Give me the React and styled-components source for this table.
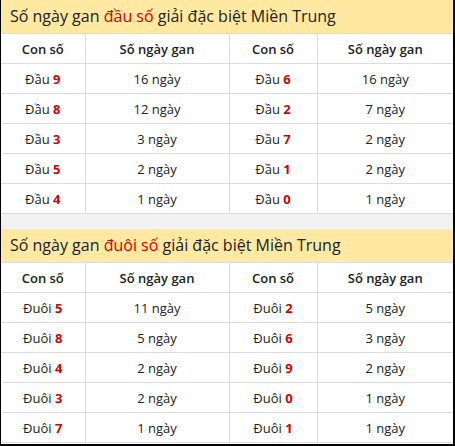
import React from "react";
import styled, { createGlobalStyle } from "styled-components";

const GlobalStyle = createGlobalStyle`
  body {
    margin: 0;
    background: #fff;
    font-family: "Open Sans", "Noto Sans", Arial, sans-serif;
  }
`;

const dauRows = [
  ["9", "16", "6", "16"],
  ["8", "12", "2", "7"],
  ["3", "3", "7", "2"],
  ["5", "2", "1", "2"],
  ["4", "1", "0", "1"],
];

const duoiRows = [
  ["5", "11", "2", "5"],
  ["8", "5", "6", "3"],
  ["4", "2", "9", "2"],
  ["3", "2", "0", "1"],
  ["7", "1", "1", "1"],
];

const Frame = styled.div`
  width: 452px;
  height: 444px;
  border-left: 1px solid #000;
  border-right: 2px solid #000;
  border-bottom: 2px solid #000;
  overflow: hidden;
  display: flex;
  flex-direction: column;
`;

const Title = styled.div`
  height: 33px;
  background: #ffe8a0;
  color: #222;
  font-size: 16px;
  line-height: 33px;
  padding-left: 9px;
  border-bottom: 1px solid #ddd;
`;

const Red = styled.span`
  color: #d80000;
`;

const Table = styled.table`
  width: 100%;
  border-collapse: collapse;
  table-layout: fixed;
  font-size: 13px;
  color: #222;
`;

const Th = styled.th`
  height: 29px;
  font-weight: 600;
  text-align: center;
  border-left: 1px solid #ddd;
  border-bottom: 1px solid #ddd;
  padding: 0;
  &:first-child {
    border-left: none;
  }
`;

const Td = styled.td`
  height: 29px;
  text-align: center;
  border-left: 1px solid #ddd;
  border-bottom: 1px solid #ddd;
  padding: 0;
  &:first-child {
    border-left: none;
  }
`;

const Num = styled.b`
  color: #d80000;
  font-weight: 700;
`;

const Gap = styled.div`
  height: 15px;
  background: #f2f2f2;
`;

const Section = ({ label, prefix, rows }) => (
  <>
    <Title>
      Số ngày gan <Red>{label}</Red> giải đặc biệt Miền Trung
    </Title>
    <Table>
      <colgroup>
        <col style={{ width: 84 }} />
        <col style={{ width: 144 }} />
        <col style={{ width: 88 }} />
        <col />
      </colgroup>
      <thead>
        <tr>
          <Th>Con số</Th>
          <Th>Số ngày gan</Th>
          <Th>Con số</Th>
          <Th>Số ngày gan</Th>
        </tr>
      </thead>
      <tbody>
        {rows.map((r, i) => (
          <tr key={i}>
            <Td>
              {prefix} <Num>{r[0]}</Num>
            </Td>
            <Td>{r[1]} ngày</Td>
            <Td>
              {prefix} <Num>{r[2]}</Num>
            </Td>
            <Td>{r[3]} ngày</Td>
          </tr>
        ))}
      </tbody>
    </Table>
  </>
);

export default function App() {
  return (
    <>
      <GlobalStyle />
      <Frame>
        <Section label="đầu số" prefix="Đầu" rows={dauRows} />
        <Gap />
        <Section label="đuôi số" prefix="Đuôi" rows={duoiRows} />
      </Frame>
    </>
  );
}
